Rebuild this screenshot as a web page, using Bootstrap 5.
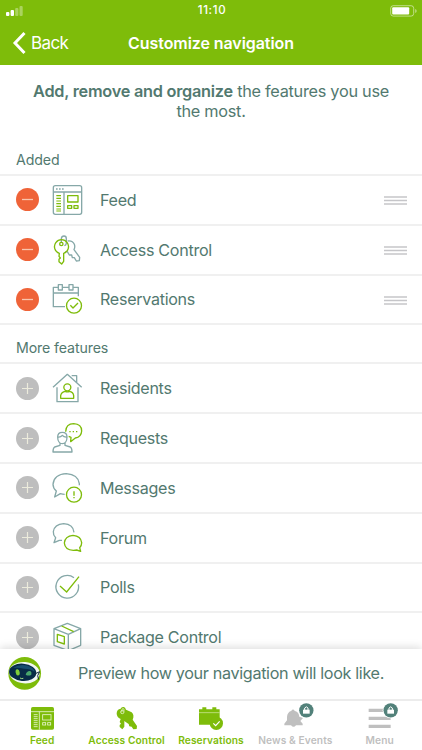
<!DOCTYPE html>
<html lang="en">
<head>
<meta charset="utf-8">
<meta name="viewport" content="width=device-width, initial-scale=1">
<title>Customize navigation</title>
<link href="https://cdn.jsdelivr.net/npm/bootstrap@5.3.0/dist/css/bootstrap.min.css" rel="stylesheet">
<style>
:root{--leaf:#7ebc0a;--pine:#52796f;--mist:#86a8a8}
body{font-family:Inter,"Liberation Sans",sans-serif;color:var(--pine);background:#fff}
.screen{height:750px;width:422px}
svg{display:block;overflow:visible;flex:none}
.top-area{background:var(--leaf);height:65px}
.status-line{height:21px;padding:0 5px 0 6px}
.clock{font-size:11.5px;font-weight:500;letter-spacing:.65px;padding:1px 0 0 2px}
.title-line{height:43px}
.back-link{padding-left:13px;font-size:17px;gap:5px;letter-spacing:-.6px;padding-top:1px}
.back-link span{padding-top:1px}
.page-title{font-size:16px;font-weight:600;letter-spacing:-.07px}
.intro{font-size:16.3px;line-height:19.5px;padding-top:17px;height:80px;letter-spacing:-.28px}
.intro b{font-weight:600;letter-spacing:-.25px}
.section-label{font-size:14.2px;padding-left:16px;letter-spacing:-.12px}
.label-a{height:29px;line-height:30px}
.label-b{height:37px;line-height:46px}
.feature-list{border-top:2px solid #f0f0f0}
.feature{height:49.8px;border-bottom:2px solid #f0f0f0;padding:0 15px 0 16px;font-size:16.1px;letter-spacing:-.29px}
.toggle-dot{width:23px;height:23px;border:0;margin-right:13px;padding:0;flex:none}
.dot-minus{background:#ef6338}
.dot-plus{background:#bebebe}
.feature-name{margin-left:18px}
.g{stroke:var(--leaf)}.m{stroke:var(--mist)}
.ico{fill:none;stroke-width:4;stroke-linejoin:round;stroke-linecap:butt}
.grip{margin-top:2px}
.preview{height:50px;background:#fff;box-shadow:0 -2px 8px rgba(0,0,0,.13);padding:0 0 1px 8px;font-size:16.2px;letter-spacing:-.35px;z-index:1}
.preview-text{margin-left:37px}
.tabs{height:51px;border-top:2px solid #ececec;background:#fff;z-index:2}
.tab-item{width:84.4px;font-size:10.2px;font-weight:600;letter-spacing:.1px;color:var(--leaf);padding-top:6px;white-space:nowrap}
.tab-item span{line-height:13px;margin-top:4px}
.locked{color:#bfbfbf}
</style>
<script src="https://cdn.jsdelivr.net/npm/bootstrap@5.3.0/dist/js/bootstrap.bundle.min.js"></script>
</head>
<body class="m-0 overflow-hidden">
<div class="screen d-flex flex-column overflow-hidden">
<header class="top-area text-white flex-shrink-0">
  <div class="status-line d-flex align-items-center position-relative justify-content-between">
    <svg width="17" height="10" fill="#fff"><rect y="6" width="3.4" height="4" rx="1"/><rect x="4.6" y="4" width="3.4" height="6" rx="1"/><rect x="9.2" y="2" width="3.2" height="8" rx="1" opacity=".35"/><rect x="13.5" width="3.2" height="10" rx="1" opacity=".35"/></svg>
    <div class="clock position-absolute start-50 translate-middle-x">11:10</div>
    <svg width="27" height="12"><rect x=".7" y=".7" width="23" height="10.4" rx="2.6" fill="none" stroke="#fff" stroke-opacity=".5"/><rect x="2.2" y="2.3" width="17" height="7.2" rx="1" fill="#fff"/><path d="M25.2 4v4q1.5-.5 1.5-2t-1.5-2" fill="#fff" opacity=".5"/></svg>
  </div>
  <div class="title-line d-flex align-items-center position-relative">
    <a class="back-link d-flex align-items-center text-white text-decoration-none"><svg width="13" height="22" fill="none" stroke="#fff" stroke-width="3"><path d="M11.500 1 2 11l9.500 10"/></svg><span>Back</span></a>
    <div class="page-title position-absolute start-50 translate-middle-x text-nowrap">Customize navigation</div>
  </div>
</header>
<main class="flex-grow-1 overflow-hidden">
  <p class="intro text-center mb-0"><b>Add, remove and organize</b> the features you use<br>the most.</p>
  <div class="section-label label-a">Added</div>
  <div class="feature-list">
    <div class="feature d-flex align-items-center">
      <button class="toggle-dot dot-minus rounded-circle" aria-label="Remove"><svg width="23" height="23" stroke="#f9c5ae" stroke-width="1.300"><path d="M6 11.500h11"/></svg></button>
      <svg class="ico" width="30" height="30" viewBox="156 27 90 90"><g class="m"><rect x="160" y="29" width="85" height="86" rx="6"/><path d="M160 48h85M192 48v67"/><path d="M168 39h5m4 0h5m4 0h5"/></g><g class="g"><path d="M169 59h14M169 67h14M169 75h14M169 83h14M169 91h14M169 99h14M169 105h14" stroke-width="3.500"/><rect x="203" y="59" width="31" height="19"/><rect x="203" y="89" width="12" height="8"/><rect x="222" y="89" width="12" height="8"/></g></svg>
      <span class="feature-name flex-grow-1">Feed</span><svg class="grip" width="23" height="9" stroke="#c6c6c9" stroke-width="1.300"><path d="M0 1h23M0 4.500h23M0 8h23"/></svg>
    </div>
    <div class="feature d-flex align-items-center">
      <button class="toggle-dot dot-minus rounded-circle" aria-label="Remove"><svg width="23" height="23" stroke="#f9c5ae" stroke-width="1.300"><path d="M6 11.500h11"/></svg></button>
      <svg class="ico" width="30" height="30" viewBox="156 176 90 90"><g class="m"><path d="M184 200v-13q1-8 8-8t7 8v14q-1 6-6 7M203 194q15-2 20 10 3 8-1 16l17 23-1 10-9 1-6-10-6 0-2-8-7 0-6-10h-6"/></g><g class="g"><path d="M178 231a21 21 0 1 1 13 0v24l-6 8-8-7v-7l4-4-4-5z"/><circle cx="184" cy="203" r="5"/></g></svg>
      <span class="feature-name flex-grow-1">Access Control</span><svg class="grip" width="23" height="9" stroke="#c6c6c9" stroke-width="1.300"><path d="M0 1h23M0 4.500h23M0 8h23"/></svg>
    </div>
    <div class="feature d-flex align-items-center">
      <button class="toggle-dot dot-minus rounded-circle" aria-label="Remove"><svg width="23" height="23" stroke="#f9c5ae" stroke-width="1.300"><path d="M6 11.500h11"/></svg></button>
      <svg class="ico" width="30" height="30" viewBox="156 327 90 90"><g class="m"><path d="M195 395h-35v-58h15m12 0h20m12 0h16v27M160 354h75"/><rect x="175" y="329" width="12" height="16"/><rect x="207" y="329" width="12" height="16"/></g><g class="g"><circle cx="222" cy="392" r="22.500"/><path d="m211 391 8 8 15-15"/></g></svg>
      <span class="feature-name flex-grow-1">Reservations</span><svg class="grip" width="23" height="9" stroke="#c6c6c9" stroke-width="1.300"><path d="M0 1h23M0 4.500h23M0 8h23"/></svg>
    </div>
  </div>
  <div class="section-label label-b">More features</div>
  <div class="feature-list">
    <div class="feature d-flex align-items-center">
      <button class="toggle-dot dot-plus rounded-circle" aria-label="Add"><svg width="23" height="23" stroke="#ecebdc" stroke-width="1.200"><path d="M6 11.500h11M11.500 6v11"/></svg></button>
      <svg class="ico" width="30" height="30" viewBox="156 41 90 90"><g class="m"><path d="m159 84 43-39 43 39M171 84v43h63V84M215 49h15v20"/></g><g class="g"><circle cx="202" cy="84" r="10.500"/><path d="M182 117v-8q2-11 14-13 6 3 12 0 12 2 13 13v8z"/></g></svg>
      <span class="feature-name">Residents</span>
    </div>
    <div class="feature d-flex align-items-center">
      <button class="toggle-dot dot-plus rounded-circle" aria-label="Add"><svg width="23" height="23" stroke="#ecebdc" stroke-width="1.200"><path d="M6 11.500h11M11.500 6v11"/></svg></button>
      <svg class="ico" width="30" height="30" viewBox="156 190 90 90"><g class="m"><path d="M173 232q0-14 14-14t14 14c0 12-6 20-14 20s-14-8-14-20M174 232q8 1 13-5 5 6 14 5M180 249v8l-16 5q-5 3-5 15h57q0-12-5-15l-16-5v-8"/></g><g class="g"><path d="M197 216q1-24 24-24 24 1 24 22-1 18-19 21l-14 11 1-13-7-3"/><path d="M208 216h4m6 0h4m6 0h4"/></g></svg>
      <span class="feature-name">Requests</span>
    </div>
    <div class="feature d-flex align-items-center">
      <button class="toggle-dot dot-plus rounded-circle" aria-label="Add"><svg width="23" height="23" stroke="#ecebdc" stroke-width="1.200"><path d="M6 11.500h11M11.500 6v11"/></svg></button>
      <svg class="ico" width="30" height="30" viewBox="156 340 90 90"><g class="m"><path d="M194 404q-6 0-13-2l-17 10 5-18q-10-8-10-20 3-30 40-32 36 3 39 30v5"/></g><g class="g"><circle cx="222" cy="405" r="22.500"/><path d="M222 395v13m0 4v4"/></g></svg>
      <span class="feature-name">Messages</span>
    </div>
    <div class="feature d-flex align-items-center">
      <button class="toggle-dot dot-plus rounded-circle" aria-label="Add"><svg width="23" height="23" stroke="#ecebdc" stroke-width="1.200"><path d="M6 11.500h11M11.500 6v11"/></svg></button>
      <svg class="ico" width="30" height="30" viewBox="156 40 90 90"><g class="m"><path d="M186 92h-8l-16 7 5-15q-8-8-7-18 3-22 31-24 29 2 31 26"/></g><g class="g"><path d="M242 125l-12-4q-4 1-10 1-25-1-27-22 2-21 26-23 24 2 26 22 0 9-6 15z"/></g></svg>
      <span class="feature-name">Forum</span>
    </div>
    <div class="feature d-flex align-items-center">
      <button class="toggle-dot dot-plus rounded-circle" aria-label="Add"><svg width="23" height="23" stroke="#ecebdc" stroke-width="1.200"><path d="M6 11.500h11M11.500 6v11"/></svg></button>
      <svg class="ico" width="30" height="30" viewBox="156 189 90 90"><g class="m"><path d="M222 206a34 34 0 1 0 13 20"/></g><g class="g"><path d="m180 231 20 18 37-46" stroke-linejoin="miter"/></g></svg>
      <span class="feature-name">Polls</span>
    </div>
    <div class="feature d-flex align-items-center">
      <button class="toggle-dot dot-plus rounded-circle" aria-label="Add"><svg width="23" height="23" stroke="#ecebdc" stroke-width="1.200"><path d="M6 11.500h11M11.500 6v11"/></svg></button>
      <svg class="ico" width="30" height="30" viewBox="156 339 90 90"><g class="m"><path d="m162 359 40-16 40 16v50l-37 16-43-16zM162 359l43 17 37-17M205 376v49"/></g><g class="g"><path d="m172 376 21 7v22l-21-7zM185 351l36 17"/></g></svg>
      <span class="feature-name">Package Control</span>
    </div>
  </div>
</main>
<section class="preview d-flex align-items-center flex-shrink-0 position-relative">
  <svg width="33" height="33" viewBox="0 0 99 99"><circle cx="50" cy="49" r="49" fill="#7ebc0a"/><ellipse cx="49" cy="47" rx="46" ry="32" fill="#f2f7f4" transform="rotate(5 49 47)"/><ellipse cx="44" cy="46" rx="41" ry="26" fill="#082c47" transform="rotate(5 44 46)"/><path d="M15 33Q34 20 58 26q19 5 22 18-12-9-32-9-20-4-33-2" fill="#174e70"/><path d="m82 50 13-6-6 12 3 12" fill="none" stroke="#152c3d" stroke-width="3"/><ellipse cx="29" cy="46" rx="6" ry="9.500" fill="#80cf38" transform="rotate(-10 29 46)"/><path d="M53 53q4-13 14-11 5 3 3 11-8 5-17 0" fill="#49a76c"/><path d="M36 63q5 3 10 1" fill="none" stroke="#a6dd84" stroke-width="3"/></svg>
  <span class="preview-text">Preview how your navigation will look like.</span>
</section>
<nav class="tabs d-flex flex-shrink-0 position-relative" aria-label="Navigation preview">
  <div class="tab-item d-flex flex-column align-items-center">
    <svg width="23" height="23" viewBox="0 0 69 69"><rect width="69" height="68" rx="5" fill="#7ebc0a"/><g fill="none" stroke="#e8f5cf" stroke-width="2.500"><path d="M0 14h69M25 14v54M8 23h12M8 29h12M8 35h12M8 41h12M8 47h12M8 53h12M8 59h12"/><rect x="35" y="23" width="25" height="16"/><rect x="35" y="47" width="9" height="7"/><rect x="50" y="47" width="9" height="7"/></g></svg><span>Feed</span></div>
  <div class="tab-item d-flex flex-column align-items-center">
    <svg width="23" height="23" viewBox="0 0 69 69"><path fill="#7ebc0a" d="M17 36C1 30 1 7 17 5q2-6 9-5 5 1 7 8 9 3 17 8 9 9 3 22l13 19-1 9-10 1-5-8-7-1-2-7-8-5-5-4v17l-6 8-8-7v-6l4-4-4-5z"/><circle cx="22" cy="15" r="5" fill="none" stroke="#e8f5cf" stroke-width="2.500"/><path d="M21 15V6q3-3 6 0v7" fill="none" stroke="#e8f5cf" stroke-width="2"/></svg><span>Access Control</span></div>
  <div class="tab-item d-flex flex-column align-items-center">
    <svg width="23" height="23" viewBox="0 0 69 69"><g fill="#7ebc0a"><path d="M0 7h10V1h12v6h18V1h12v6h10v12h0v34H0z"/><circle cx="52" cy="49" r="20"/></g><path d="m43 49 7 7 12-13" fill="none" stroke="#fff" stroke-width="3.500"/><path d="M0 17h62" stroke="#d8edac" stroke-width="2"/></svg><span>Reservations</span></div>
  <div class="tab-item locked d-flex flex-column align-items-center">
    <svg width="23" height="23" viewBox="0 0 69 69"><path fill="#bfbfbf" d="M1 55v-5l8-10V30q1-14 12-18l6-5 6 5q12 4 13 17l11 4-8 9 7 8v5H36q-7 9-15 0z"/><circle cx="67" cy="10" r="24" fill="#fff"/><circle cx="67" cy="10" r="21.500" fill="#52817a"/><path d="M57 8h20v12H57z" fill="#fff"/><path d="M62 9V3q5-7 10 0v6" fill="none" stroke="#fff" stroke-width="3"/></svg><span>News &amp; Events</span></div>
  <div class="tab-item locked d-flex flex-column align-items-center">
    <svg width="23" height="23" viewBox="0 0 69 69"><path d="M2 10h66M2 34h66M2 58h66" stroke="#bfbfbf" stroke-width="10"/><circle cx="68" cy="10" r="24" fill="#fff"/><circle cx="68" cy="10" r="21.500" fill="#52817a"/><path d="M58 8h20v12H58z" fill="#fff"/><path d="M63 9V3q5-7 10 0v6" fill="none" stroke="#fff" stroke-width="3"/></svg><span>Menu</span></div>
</nav>
</div>
</body>
</html>
